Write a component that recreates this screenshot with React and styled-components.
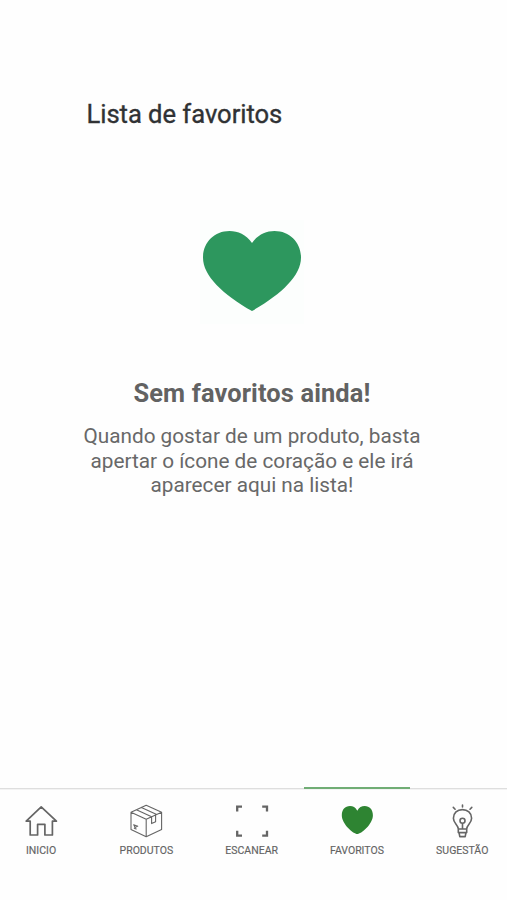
import React from "react";
import styled, { createGlobalStyle } from "styled-components";

const GlobalStyle = createGlobalStyle`
  * { box-sizing: border-box; }
  body { margin: 0; background: #fff; overflow: hidden; font-family: Roboto, sans-serif; }
`;

const Screen = styled.div`
  width: 507px;
  height: 900px;
  display: flex;
  flex-direction: column;
  background: #fefefe;
  overflow: hidden;
`;

const Title = styled.h1`
  margin: 98px 0 0 86.5px;
  font-size: 25.6px;
  line-height: 32px;
  font-weight: 400;
  letter-spacing: -0.04px;
  color: #303234;
  -webkit-text-stroke: 0.35px #303234;
  white-space: nowrap;
`;

const EmptyState = styled.main`
  width: 504px;
  flex: 1;
  display: flex;
  flex-direction: column;
  align-items: center;
`;

const HeartTile = styled.div`
  margin-top: 90px;
  width: 104px;
  height: 104px;
  background: #fcfefd;
  svg { display: block; }
`;

const Heading = styled.h2`
  margin: 53px 0 0;
  font-size: 25.4px;
  line-height: 32px;
  font-weight: 700;
  letter-spacing: 0.13px;
  color: #626262;
  white-space: nowrap;
`;

const Message = styled.p`
  margin: 15.4px 0 0;
  text-align: center;
  font-size: 20.75px;
  line-height: 24.3px;
  color: #686868;
  white-space: nowrap;
`;

const TabBar = styled.nav`
  height: 112px;
  width: 526.5px;
  margin-left: -11.6px;
  display: grid;
  grid-template-columns: repeat(5, 105.3px);
  box-shadow: inset 0 1px #dedede, inset 0 2px #f3f3f3;
  margin-top: auto;
`;

const Tab = styled.a`
  display: flex;
  flex-direction: column;
  align-items: center;
  margin-top: -1px;
  border-top: 2px solid ${(p) => (p.$active ? "#70ad75" : "transparent")};
  padding-top: 14px;
  color: #656565;
  svg { display: block; flex: none; overflow: visible; }
`;

const TabLabel = styled.span`
  margin-top: 5px;
  font-size: 10.5px;
  line-height: 14px;
  white-space: nowrap;
  -webkit-text-stroke: 0.15px #606060;
`;

const LineIcon = ({ children, width = 1.5 }) => (
  <svg width="36" height="36" viewBox="0 0 36 36" fill="none" stroke="#656565" strokeWidth={width} strokeLinejoin="round" strokeLinecap="round">
    {children}
  </svg>
);

const HomeIcon = () => (
  <LineIcon width={1.7}>
    <path d="M18.2 3.8 3.2 18.2H7.2V32H14.6V21.3H21.9V32H29.4V18.2H33.4Z" />
  </LineIcon>
);

const BoxIcon = () => (
  <LineIcon width={1.1}>
    <path d="M18.2 2.2 33.6 9.2V26.6L18.2 33.8 3 26.6V9.2ZM3 9.2 18.2 16.2 33.6 9.2M18.2 16.2V33.8M13.4 4.4 28.7 11.4M8.4 6.8 23.6 13.8V20.6L27.6 18.8V12" />
    <path d="M5.7 21.8 9.7 23.2M6.3 25.2 8.2 26M5.8 21.8 7.1 24.4 9.2 23.2" />
  </LineIcon>
);

const ScanIcon = () => (
  <LineIcon width={2.3}>
    <path strokeLinecap="butt" strokeLinejoin="miter" d="M3.2 8.4V3.6H8M28.2 3.6H33V8.4M33 27.8V32.6H28.2M8 32.6H3.2V27.8" />
  </LineIcon>
);

const FavoriteIcon = () => (
  <svg width="36" height="36" viewBox="0 0 36 36">
    <path fill="#2e8432" d="M18.3 7.7C16.5 4.5 14 3.1 11 3.1 6 3.1 2.8 6.7 2.8 12.3 2.8 21.3 14.6 31.1 18.3 31.1 22 31.1 33.9 21.3 33.9 12.3 33.9 6.7 30.6 3.1 25.7 3.1 22.6 3.1 20.1 4.5 18.3 7.7Z" />
  </svg>
);

const BulbIcon = () => (
  <LineIcon width={1.6}>
    <path d="M14.3 26C14.3 21.8 9.4 20.3 9.4 15.2 9.4 10 13.3 6.6 18.4 6.6S27.6 10 27.6 15.2C27.6 20.3 22.7 21.8 22.7 26ZM14.3 26V29.6H22.7V26M15.1 29.8 15.8 33.6H21.2L21.9 29.8M18.5 20.6V25.5" />
    <circle cx="18.5" cy="17.8" r="2.5" />
    <path d="M18.5 2V4M9.3 4.4 11.1 6.2M27.8 4.4 26 6.2" />
  </LineIcon>
);

const tabs = [
  { label: "INICIO", Icon: HomeIcon },
  { label: "PRODUTOS", Icon: BoxIcon },
  { label: "ESCANEAR", Icon: ScanIcon },
  { label: "FAVORITOS", Icon: FavoriteIcon, active: true },
  { label: "SUGESTÃO", Icon: BulbIcon },
];

export default function App() {
  return (
    <>
      <GlobalStyle />
      <Screen>
        <Title>Lista de favoritos</Title>
        <EmptyState>
          <HeartTile>
            <svg width="104" height="104" viewBox="200 220 104 104">
              <path fill="#2d975e" d="M252 243C246 234.5 238 231 229.5 231 214 231 203 243 203 257.5 203 276 223 294.5 252 311 281 294.5 301 276 301 257.5 301 243 290 231 274.5 231 266 231 258 234.5 252 243Z" />
            </svg>
          </HeartTile>
          <Heading>Sem favoritos ainda!</Heading>
          <Message>
            Quando gostar de um produto, basta<br />
            apertar o ícone de coração e ele irá<br />
            aparecer aqui na lista!
          </Message>
        </EmptyState>
        <TabBar>
          {tabs.map(({ label, Icon, active }) => (
            <Tab key={label} $active={active}>
              <Icon />
              <TabLabel>{label}</TabLabel>
            </Tab>
          ))}
        </TabBar>
      </Screen>
    </>
  );
}
